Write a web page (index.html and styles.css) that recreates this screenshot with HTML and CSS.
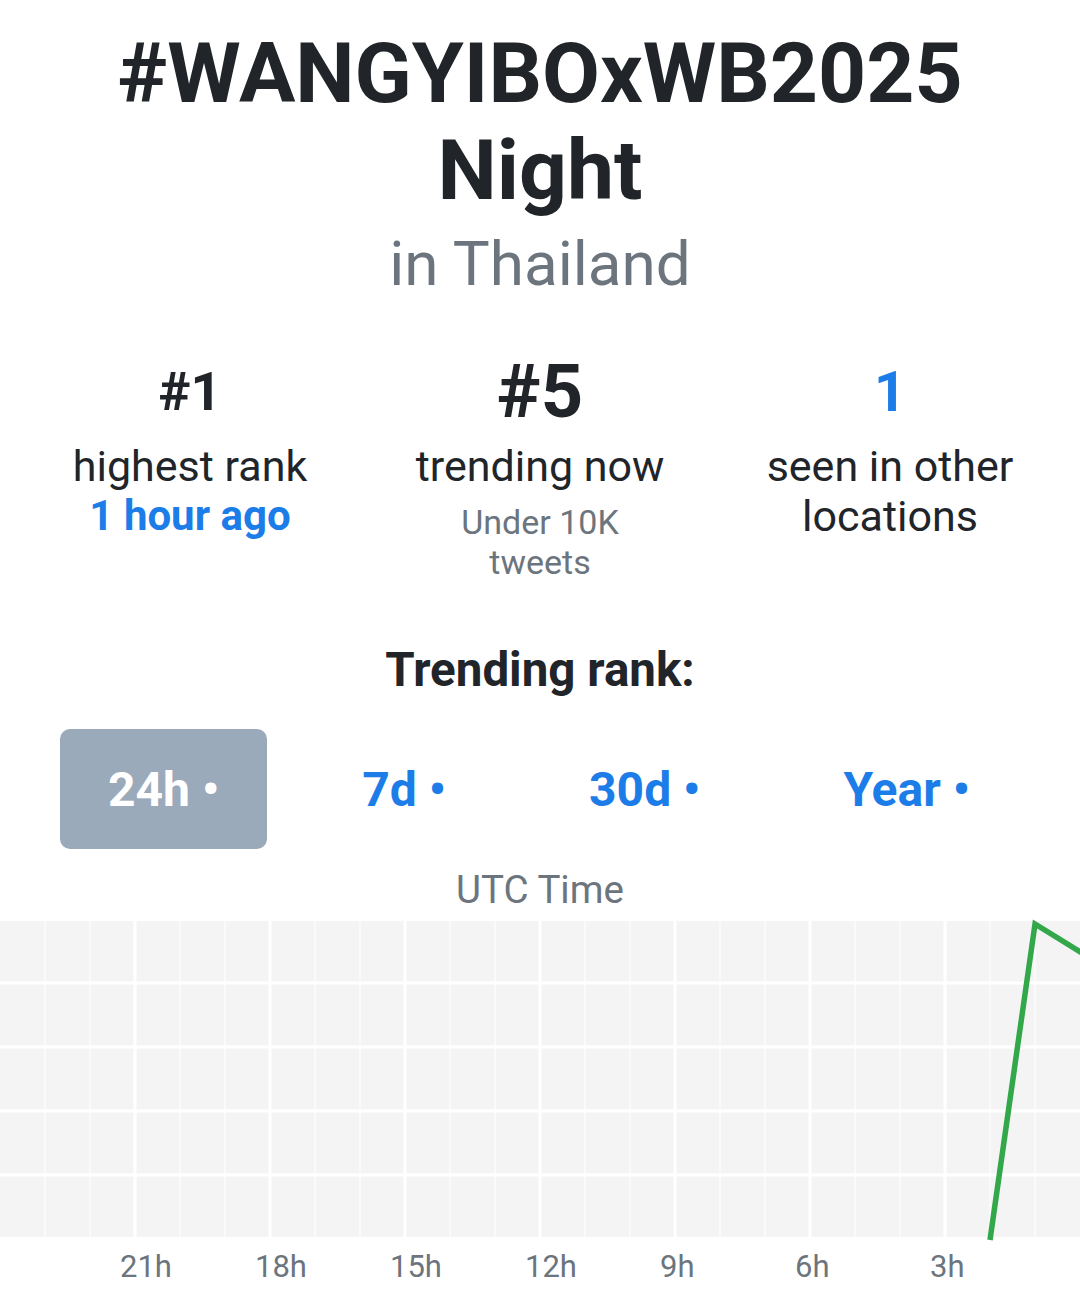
FILE: index.html
```html
<!DOCTYPE html>
<html lang="en">
<head>
<meta charset="utf-8">
<title>#WANGYIBOxWB2025 Night in Thailand</title>
<link rel="stylesheet" href="styles.css">
</head>
<body>
<div class="page">
  <h1 class="title">#WANGYIBOxWB2025<br>Night</h1>
  <div class="loc">in Thailand</div>

  <div class="stats">
    <div class="stat">
      <div class="num num-sm">#1</div>
      <div class="label">highest rank</div>
      <div class="label strong blue">1 hour ago</div>
    </div>
    <div class="stat">
      <div class="num num-lg">#5</div>
      <div class="label">trending now</div>
      <div class="sub">Under 10K tweets</div>
    </div>
    <div class="stat">
      <div class="num num-md blue">1</div>
      <div class="label">seen in other locations</div>
    </div>
  </div>

  <h2 class="section">Trending rank:</h2>

  <div class="tabs">
    <div class="tab active">24h •</div>
    <div class="tab">7d •</div>
    <div class="tab">30d •</div>
    <div class="tab">Year •</div>
  </div>

  <div class="axis-title">UTC Time</div>

  <div class="chart">
    <svg class="chart-svg" width="1080" height="316" viewBox="0 0 1080 316">
      <rect x="0" y="0" width="1080" height="316" fill="#f4f4f4"/>
      <g stroke="#fafafa" stroke-width="2">
        <line x1="45" y1="0" x2="45" y2="316"/>
        <line x1="90" y1="0" x2="90" y2="316"/>
        <line x1="180" y1="0" x2="180" y2="316"/>
        <line x1="225" y1="0" x2="225" y2="316"/>
        <line x1="315" y1="0" x2="315" y2="316"/>
        <line x1="360" y1="0" x2="360" y2="316"/>
        <line x1="450" y1="0" x2="450" y2="316"/>
        <line x1="495" y1="0" x2="495" y2="316"/>
        <line x1="585" y1="0" x2="585" y2="316"/>
        <line x1="630" y1="0" x2="630" y2="316"/>
        <line x1="720" y1="0" x2="720" y2="316"/>
        <line x1="765" y1="0" x2="765" y2="316"/>
        <line x1="855" y1="0" x2="855" y2="316"/>
        <line x1="900" y1="0" x2="900" y2="316"/>
        <line x1="990" y1="0" x2="990" y2="316"/>
        <line x1="1035" y1="0" x2="1035" y2="316"/>
      </g>
      <g stroke="#ffffff" stroke-width="3">
        <line x1="135" y1="0" x2="135" y2="316"/>
        <line x1="270" y1="0" x2="270" y2="316"/>
        <line x1="405" y1="0" x2="405" y2="316"/>
        <line x1="540" y1="0" x2="540" y2="316"/>
        <line x1="675" y1="0" x2="675" y2="316"/>
        <line x1="810" y1="0" x2="810" y2="316"/>
        <line x1="945" y1="0" x2="945" y2="316"/>
        <line x1="0" y1="62" x2="1080" y2="62"/>
        <line x1="0" y1="126" x2="1080" y2="126"/>
        <line x1="0" y1="190" x2="1080" y2="190"/>
        <line x1="0" y1="254" x2="1080" y2="254"/>
      </g>
      <polyline points="990,319 1035,3 1082,32" fill="none" stroke="#32a84b" stroke-width="5.5" stroke-linejoin="miter"/>
    </svg>
  </div>

  <div class="axis">
    <span class="tick">21h</span>
    <span class="tick">18h</span>
    <span class="tick">15h</span>
    <span class="tick">12h</span>
    <span class="tick">9h</span>
    <span class="tick">6h</span>
    <span class="tick">3h</span>
  </div>
</div>
</body>
</html>
```

FILE: styles.css
```css
* { box-sizing: border-box; }

html, body {
  margin: 0;
  padding: 0;
  background: #ffffff;
}

body {
  font-family: Roboto, "Liberation Sans", Arial, sans-serif;
  color: #212529;
  width: 1080px;
  overflow: hidden;
}

.page {
  width: 1080px;
  text-align: center;
}

.title {
  margin: 25px 0 0;
  font-size: 84px;
  line-height: 97px;
  font-weight: 700;
  color: #212529;
  letter-spacing: 0;
}

.loc {
  margin-top: 8px;
  font-size: 62px;
  line-height: 74px;
  color: #6c757d;
  font-weight: 400;
}

.stats {
  margin-top: 50px;
  padding: 0 15px;
  display: flex;
  align-items: flex-start;
}

.stat {
  flex: 1 1 0;
  display: flex;
  flex-direction: column;
  align-items: center;
}

.num {
  font-weight: 700;
  line-height: 82px;
  margin-bottom: 8px;
  color: #212529;
}

.num-sm { font-size: 54px; }
.num-lg { font-size: 74px; }
.num-md { font-size: 56px; }

.label {
  font-size: 43px;
  line-height: 50px;
  color: #212529;
}

.strong { font-weight: 700; font-size: 42px; }

.blue { color: #1d7de8; }

.sub {
  margin-top: 11px;
  width: 200px;
  font-size: 34px;
  line-height: 40px;
  color: #6c757d;
}

.section {
  margin: 60px 0 0;
  font-size: 47.5px;
  line-height: 56px;
  font-weight: 700;
  color: #212529;
}

.tabs {
  margin-top: 31px;
  padding: 0 62px 0 60px;
  display: flex;
  justify-content: space-between;
  align-items: center;
}

.tab {
  height: 120px;
  padding: 0 48px;
  display: flex;
  align-items: center;
  font-size: 48px;
  font-weight: 700;
  color: #1d7de8;
  border-radius: 10px;
  white-space: nowrap;
}

.tab.active {
  background: #9aaaba;
  color: #ffffff;
}

.axis-title {
  margin-top: 18px;
  font-size: 38.5px;
  line-height: 46px;
  color: #6c757d;
}

.chart {
  margin-top: 8px;
  height: 316px;
}

.chart-svg {
  display: block;
  overflow: visible;
}

.axis {
  margin-top: 12px;
  padding-left: 120px;
  display: flex;
  text-align: left;
}

.tick {
  width: 135px;
  flex: 0 0 135px;
  font-size: 31px;
  line-height: 36px;
  color: #6c757d;
}
```
